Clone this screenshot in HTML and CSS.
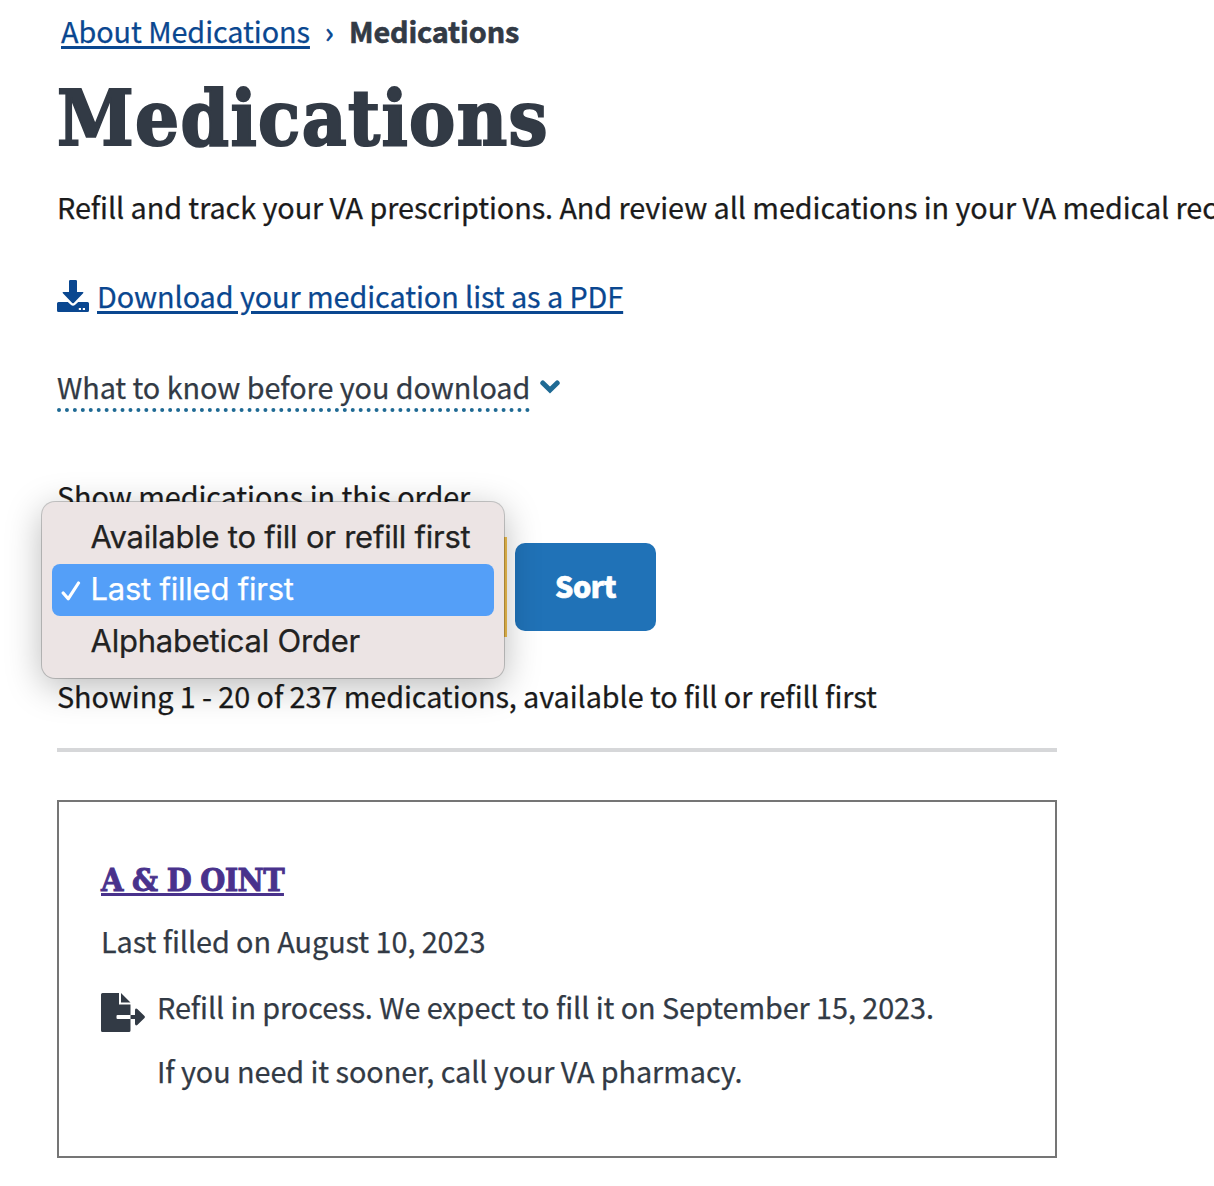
FILE: index.html
```html
<!DOCTYPE html>
<html lang="en">
<head>
<meta charset="utf-8">
<title>Medications</title>
<link rel="stylesheet" href="styles.css">
</head>
<body>
<nav class="breadcrumb" aria-label="Breadcrumb">
  <a class="link" href="#">About Medications</a>
  <span class="separator">›</span>
  <strong class="current">Medications</strong>
</nav>
<main class="content">
  <h1 class="title">Medications</h1>
  <p class="intro">Refill and track your VA prescriptions. And review all medications in your VA medical records.</p>
  <div class="download">
    <svg class="download-icon" viewBox="0 0 32 32" aria-hidden="true">
      <path d="M12 1.2Q12 0 13.2 0h5.6Q20 0 20 1.200V12h5.600q1.500.1.5 1.200L16.800 23q-.8.700-1.600 0L5.900 13.200q-1-1.100.5-1.200H12z"/>
      <path fill-rule="evenodd" d="M1.500 22h9.300l3 2.800q2.200 1.800 4.400 0l3-2.800h9.300q1.500 0 1.500 1.500v7q0 1.500-1.500 1.500h-29Q0 32 0 30.500v-7Q0 22 1.500 22zM21.800 28v2h2.200v-2zm4 0v2H28v-2z"/>
    </svg>
    <a class="link" href="#">Download your medication list as a PDF</a>
  </div>
  <div class="additional-info">
    <span class="additional-info-label">What to know before you download</span>
    <svg class="chevron" viewBox="0 0 20 14" aria-hidden="true"><path d="M2.800 3L10 10l7.200-7"/></svg>
  </div>
  <form class="sort">
    <label class="sort-label">Show medications in this order</label>
    <div class="sort-row">
      <div class="select">
        <ul class="menu" role="listbox">
          <li class="option">Available to fill or refill first</li>
          <li class="option option-selected">
            <svg class="check" viewBox="0 0 20 20" aria-hidden="true"><path d="M2.200 12l5 5.800L17.500 2"/></svg>
            <span>Last filled first</span></li>
          <li class="option">Alphabetical Order</li>
        </ul>
      </div>
      <button class="sort-button" type="button">Sort</button>
    </div>
  </form>
  <p class="count">Showing 1 - 20 of 237 medications, available to fill or refill first</p>
  <hr class="divider">
  <article class="card">
    <h2 class="card-title"><a class="card-link" href="#">A &amp; D OINT</a></h2>
    <p class="last-filled">Last filled on August 10, 2023</p>
    <div class="status">
      <svg class="status-icon" viewBox="0 0 44 39" aria-hidden="true">
        <path d="M1.500 0H18v11.500h11.500V22H16.500q-1 0-1 1v2q0 1 1 1h13v11.500q0 1.500-1.500 1.500H1.500Q0 39 0 37.500v-36Q0 0 1.500 0z"/>
        <path d="M20 0l9.500 9.500H20zM29.500 22H34v-5q.5-2.200 2.300-1l7.200 7q.8 1 0 2l-7.200 7q-1.800 1.200-2.300-1v-5h-4.500z"/>
      </svg>
      <div class="status-text">
        <p>Refill in process. We expect to fill it on September 15, 2023.</p>
        <p>If you need it sooner, call your VA pharmacy.</p>
      </div>
    </div>
  </article>
</main>
</body>
</html>
```

FILE: styles.css
```css
* {
  box-sizing: border-box;
}

body {
  margin: 0;
  min-height: 1186px;
  overflow: hidden;
  background: #fff;
  color: #1b1b1b;
  font-family: "Noto Sans CJK SC", "Open Sans", sans-serif;
  font-size: 28.8px;
  letter-spacing: -.067px;
  line-height: 42px;
  white-space: nowrap;
  -webkit-text-stroke: .25px currentColor;
}

p,
h1,
h2,
ul {
  margin: 0;
  padding: 0;
}

.link,
.card-link {
  color: #0a4790;
  text-decoration: underline;
  text-decoration-thickness: 3px;
  text-underline-offset: 3px;
}

.breadcrumb {
  display: flex;
  height: 50px;
  padding: 10px 61px 0;
  color: #323a45;
}

.separator {
  width: 39px;
  text-align: center;
  color: #0a4790;
  -webkit-text-stroke-width: .6px;
}

.current {
  letter-spacing: -.12px;
  -webkit-text-stroke-width: .6px;
}

.content {
  padding-left: 57px;
}

.title {
  height: 136px;
  padding-top: 18px;
  color: #323a45;
  font-family: "DejaVu Serif Condensed", "DejaVu Serif", serif;
  font-size: 77px;
  font-weight: 700;
  letter-spacing: 1.4px;
  line-height: 100px;
  -webkit-text-stroke-width: 2px;
}

.intro {
  height: 89px;
  overflow: hidden;
}

.download {
  display: flex;
  gap: 8px;
  height: 91px;
}

.download-icon {
  width: 32px;
  height: 32px;
  margin-top: 5px;
  fill: #0a4790;
}

.additional-info {
  display: flex;
  gap: 10px;
  height: 109px;
  color: #323a45;
}

.additional-info-label {
  height: 46px;
  border-bottom: 4px dotted #1f6a94;
}

.chevron {
  width: 20px;
  height: 14px;
  margin-top: 14px;
  fill: none;
  stroke: #1f6a94;
  stroke-width: 5;
  stroke-linecap: round;
}

.sort {
  height: 200px;
}

.sort-label {
  display: block;
  height: 68px;
}

.sort-row {
  display: flex;
  gap: 14px;
}

.select {
  position: relative;
  width: 444px;
  height: 88px;
  outline: 4px solid #f2c04f;
  outline-offset: 2px;
}

.menu {
  position: absolute;
  top: -41px;
  left: -15px;
  z-index: 1;
  width: 462px;
  height: 176px;
  padding: 10px;
  border-radius: 13px;
  background: #ece4e4;
  box-shadow: 0 0 0 1px rgba(0, 0, 0, .2), 0 8px 36px rgba(0, 0, 0, .28);
  color: #222;
  font-family: Inter, "Liberation Sans", sans-serif;
  font-size: 31px;
  letter-spacing: -.23px;
  list-style: none;
}

.option {
  display: flex;
  align-items: center;
  height: 52px;
  padding: 0 0 2px 38.5px;
}

.option-selected {
  gap: 10px;
  padding-left: 8.5px;
  border-radius: 8px;
  background: #549ff8;
  color: #fff;
}

.check {
  width: 20px;
  height: 20px;
  margin-top: 4px;
  fill: none;
  stroke: #fff;
  stroke-width: 3.2;
  stroke-linecap: round;
  stroke-linejoin: round;
}

.sort-button {
  width: 141px;
  height: 88px;
  padding: 0 0 2px;
  border: 0;
  border-radius: 10px;
  background: #2072b7;
  color: #fff;
  font: inherit;
  font-weight: 900;
  letter-spacing: -.5px;
  -webkit-text-stroke-width: .6px;
}

.count {
  height: 73px;
}

.divider {
  width: 1000px;
  height: 4px;
  margin: 0;
  border: 0;
  background: #d6d7d9;
}

.card {
  width: 1000px;
  height: 358px;
  margin-top: 48px;
  padding: 58px 42px 0;
  border: 2px solid #757575;
  color: #323a45;
}

.card-title {
  height: 60px;
  font-family: "DejaVu Serif Condensed", "DejaVu Serif", serif;
  font-size: 32px;
  font-weight: 700;
  letter-spacing: -.67px;
  line-height: 40px;
  -webkit-text-stroke-width: .9px;
}

.card-link {
  color: #49328c;
  text-underline-offset: 2px;
}

.last-filled {
  height: 66px;
}

.status {
  display: flex;
  gap: 12px;
}

.status-icon {
  width: 44px;
  height: 39px;
  margin-top: 7px;
  fill: #323a45;
}

.status-text {
  display: grid;
  gap: 22px;
}
```
